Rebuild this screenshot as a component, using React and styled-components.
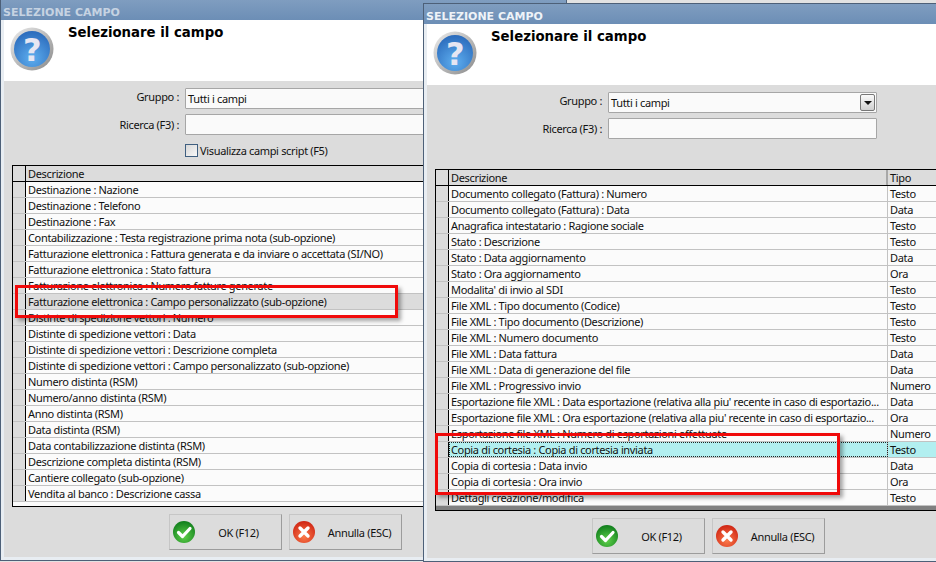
import React from "react";
import styled, { createGlobalStyle } from "styled-components";

const UI_FONT = '"Noto Sans", "Open Sans", sans-serif';

const GlobalStyle = createGlobalStyle`
  html, body {
    margin: 0;
    width: 936px;
    height: 562px;
    overflow: hidden;
    background: #e2e2e2;
    font-family: ${UI_FONT};
    letter-spacing: -0.34px;
  }
`;

const Desktop = styled.div`
  position: relative;
  width: 936px;
  height: 562px;
  overflow: hidden;
`;

const Window = styled.div`
  position: absolute;
  left: ${(p) => p.$left}px;
  top: ${(p) => p.$top}px;
  width: ${(p) => p.$width}px;
  height: ${(p) => p.$height}px;
  box-sizing: border-box;
  display: flex;
  flex-direction: column;
  border: 1px solid #4d6078;
  background: #e8edf2;
`;

const TitleBar = styled.div`
  height: 20px;
  flex: none;
  padding-left: 2px;
  background: linear-gradient(#7f9dc0, #6c8eb6);
  color: ${(p) => (p.$active ? "#eef3f8" : "#c6d3e2")};
  font: bold 11px/25px "DejaVu Sans", sans-serif;
  letter-spacing: 0;
`;

const Header = styled.div`
  height: 61px;
  flex: none;
  margin: 0 3px;
  display: flex;
  background: #fff;
`;

const Heading = styled.div`
  margin: 4px 0 0 14px;
  color: #000;
  font: bold 13.3px/17px "DejaVu Sans", sans-serif;
  letter-spacing: 0;
`;

const IconSlot = styled.div`
  margin: 7px 0 0 6px;
  width: 44px;
  height: 44px;
`;

const Body = styled.div`
  flex: 1;
  min-height: 0;
  margin: 0 3px 3px;
  padding: 7px 8px 0;
  background: #dcdcdc;
  display: flex;
  flex-direction: column;
`;

const FormRow = styled.div`
  display: grid;
  grid-template-columns: 167px 269px;
  column-gap: 6px;
  align-items: center;
  height: 21px;
  margin-bottom: 5px;
`;

const Label = styled.div`
  margin-bottom: ${(p) => p.$lift || 0}px;
  text-align: right;
  font-size: 11px;
  line-height: 18px;
  color: #111;
`;

const Field = styled.div`
  position: relative;
  box-sizing: border-box;
  height: 21px;
  padding-left: 2px;
  border: 1px solid #a6a6a6;
  border-radius: 1px;
  background: #fafafa;
  font-size: 11px;
  line-height: 19px;
  color: #111;
`;

const DropButton = styled.div`
  position: absolute;
  top: 1px;
  right: 1px;
  width: 15px;
  height: 17px;
  box-sizing: border-box;
  display: flex;
  align-items: center;
  justify-content: center;
  border: 1px solid #777;
  border-radius: 2px;
  background: linear-gradient(#fafafa, #cfcfcf);

  &::after {
    content: "";
    border-left: 4px solid transparent;
    border-right: 4px solid transparent;
    border-top: 4px solid #111;
  }
`;

const CheckRow = styled.div`
  height: 16px;
  margin: 2px 0 7px 173px;
  display: flex;
  align-items: center;
  gap: 2px;
  font-size: 11px;
  color: #111;
`;

const CheckBox = styled.div`
  width: 11px;
  height: 11px;
  border: 1px solid #3f5f80;
  background: linear-gradient(135deg, #d8d8d8, #f8f8f8);
`;

const Grid = styled.div`
  flex: none;
  height: 342px;
  box-sizing: border-box;
  overflow: hidden;
  border: 1px solid #000;
  background: #fbfbfb;
`;

const HeadRow = styled.div`
  display: grid;
  grid-template-columns: ${(p) => p.$columns};
  height: 16px;
  box-sizing: border-box;
  border-bottom: 1px solid #000;
  background: #dcdcdc;
`;

const Row = styled.div`
  display: grid;
  grid-template-columns: ${(p) => p.$columns};
  height: 16px;
  box-sizing: border-box;
  border-bottom: 1px solid #c2c2c2;
  background: ${(p) => (p.$selected ? "#dcdcdc" : "#fbfbfb")};
`;

const Indicator = styled.div`
  background: #dcdcdc;
  border-right: 1px solid #000;
`;

const Cell = styled.div`
  box-sizing: border-box;
  padding-left: 2px;
  font-size: 11px;
  line-height: 15px;
  white-space: nowrap;
  overflow: hidden;
  color: #111;
  background: ${(p) => (p.$focus ? "#b2eff0" : "transparent")};
  outline: ${(p) => (p.$dotted ? "1px dotted #222" : "none")};
  outline-offset: -1px;
  border-right: ${(p) => (p.$divider ? "1px solid #c2c2c2" : "none")};
`;

const HeadCell = styled(Cell)`
  border-right: ${(p) => (p.$divider ? "2px solid #a8a8a8" : "none")};
`;

const ScrollEdge = styled.div`
  height: 4px;
  background: #808080;
`;

const ButtonBar = styled.div`
  display: flex;
  gap: 7px;
  margin: 7px 0 0 157px;
`;

const Button = styled.div`
  width: 113px;
  height: 36px;
  box-sizing: border-box;
  display: flex;
  align-items: center;
  border: 1px solid #c6c6c6;
  border-right-color: #9c9c9c;
  border-bottom-color: #9c9c9c;
  background: #dcdcdc;
  font-size: 11px;
  color: #111;
`;

const ButtonIcon = styled.svg`
  flex: none;
  margin-left: 2px;
  width: 24px;
  height: 24px;
`;

const ButtonLabel = styled.span`
  flex: 1;
  text-align: center;
  padding-left: ${(p) => p.$shift}px;
`;

const RedFrame = styled.div`
  position: absolute;
  left: ${(p) => p.$left}px;
  top: ${(p) => p.$top}px;
  width: ${(p) => p.$width}px;
  height: ${(p) => p.$height}px;
  box-sizing: border-box;
  border: 3px solid #f00a0a;
  box-shadow: 3px 3px 4px rgba(0, 0, 0, 0.35);
`;

function QuestionIcon({ id }) {
  return (
    <svg width="44" height="44" viewBox="0 0 44 44">
      <defs>
        <linearGradient id={`${id}-ring`} x1="0" y1="0" x2="1" y2="1">
          <stop offset="0" stopColor="#ececec" />
          <stop offset="1" stopColor="#8a8a8a" />
        </linearGradient>
        <radialGradient id={`${id}-disc`} cx="0.5" cy="0.75" r="0.8">
          <stop offset="0" stopColor="#5eaeef" />
          <stop offset="1" stopColor="#2766b8" />
        </radialGradient>
      </defs>
      <circle cx="22" cy="22" r="21.5" fill={`url(#${id}-ring)`} />
      <circle cx="22" cy="22" r="18" fill={`url(#${id}-disc)`} />
      <text
        x="22"
        y="34"
        textAnchor="middle"
        fontFamily="'DejaVu Sans', sans-serif"
        fontWeight="bold"
        fontSize="32"
        fill="#e6e6f2"
      >
        ?
      </text>
    </svg>
  );
}

function OkIcon({ id }) {
  return (
    <ButtonIcon viewBox="0 0 24 24">
      <defs>
        <radialGradient id={`${id}-ok`} cx="0.5" cy="0.7" r="0.7">
          <stop offset="0" stopColor="#5fd04a" />
          <stop offset="1" stopColor="#0f7d1c" />
        </radialGradient>
      </defs>
      <circle cx="12" cy="12" r="11" fill={`url(#${id}-ok)`} />
      <path d="M6.5 12.5l4 4 7.5-8" fill="none" stroke="#fff" strokeWidth="3.2" strokeLinecap="round" strokeLinejoin="round" />
    </ButtonIcon>
  );
}

function CancelIcon({ id }) {
  return (
    <ButtonIcon viewBox="0 0 24 24">
      <defs>
        <radialGradient id={`${id}-ko`} cx="0.5" cy="0.7" r="0.7">
          <stop offset="0" stopColor="#fb7a4a" />
          <stop offset="1" stopColor="#cf2413" />
        </radialGradient>
      </defs>
      <circle cx="12" cy="12" r="11" fill={`url(#${id}-ko)`} />
      <path d="M8 8l8 8M16 8l-8 8" fill="none" stroke="#fff" strokeWidth="3.4" strokeLinecap="round" />
    </ButtonIcon>
  );
}

const leftRows = [
  "Destinazione : Nazione",
  "Destinazione : Telefono",
  "Destinazione : Fax",
  "Contabilizzazione : Testa registrazione prima nota (sub-opzione)",
  "Fatturazione elettronica : Fattura generata e da inviare o accettata (SI/NO)",
  "Fatturazione elettronica : Stato fattura",
  "Fatturazione elettronica : Numero fatture generate",
  "Fatturazione elettronica : Campo personalizzato (sub-opzione)",
  "Distinte di spedizione vettori : Numero",
  "Distinte di spedizione vettori : Data",
  "Distinte di spedizione vettori : Descrizione completa",
  "Distinte di spedizione vettori : Campo personalizzato (sub-opzione)",
  "Numero distinta (RSM)",
  "Numero/anno distinta (RSM)",
  "Anno distinta (RSM)",
  "Data distinta (RSM)",
  "Data contabilizzazione distinta (RSM)",
  "Descrizione completa distinta (RSM)",
  "Cantiere collegato (sub-opzione)",
  "Vendita al banco : Descrizione cassa",
];

const rightRows = [
  ["Documento collegato (Fattura) : Numero", "Testo"],
  ["Documento collegato (Fattura) : Data", "Data"],
  ["Anagrafica intestatario : Ragione sociale", "Testo"],
  ["Stato : Descrizione", "Testo"],
  ["Stato : Data aggiornamento", "Data"],
  ["Stato : Ora aggiornamento", "Ora"],
  ["Modalita' di invio al SDI", "Testo"],
  ["File XML : Tipo documento (Codice)", "Testo"],
  ["File XML : Tipo documento (Descrizione)", "Testo"],
  ["File XML : Numero documento", "Testo"],
  ["File XML : Data fattura", "Data"],
  ["File XML : Data di generazione del file", "Data"],
  ["File XML : Progressivo invio", "Numero"],
  ["Esportazione file XML : Data esportazione (relativa alla piu' recente in caso di esportazio...", "Data"],
  ["Esportazione file XML : Ora esportazione (relativa alla piu' recente in caso di esportazio...", "Ora"],
  ["Esportazione file XML : Numero di esportazioni effettuate", "Numero"],
  ["Copia di cortesia : Copia di cortesia inviata", "Testo"],
  ["Copia di cortesia : Data invio", "Data"],
  ["Copia di cortesia : Ora invio", "Ora"],
  ["Dettagli creazione/modifica", "Testo"],
];

const LEFT_COLUMNS = "13px 1fr";
const RIGHT_COLUMNS = "13px 439px 1fr";

function FieldPicker({ id, active, left, top, width, height, children, dropdown, showScript }) {
  return (
    <Window $left={left} $top={top} $width={width} $height={height}>
      <TitleBar $active={active}>SELEZIONE CAMPO</TitleBar>
      <Header>
        <IconSlot>
          <QuestionIcon id={id} />
        </IconSlot>
        <Heading>Selezionare il campo</Heading>
      </Header>
      <Body>
        <FormRow>
          <Label $lift={3}>Gruppo :</Label>
          <Field>
            Tutti i campi
            {dropdown && <DropButton />}
          </Field>
        </FormRow>
        <FormRow>
          <Label>Ricerca (F3) :</Label>
          <Field />
        </FormRow>
        <CheckRow>
          {showScript && (
            <>
              <CheckBox />
              Visualizza campi script (F5)
            </>
          )}
        </CheckRow>
        {children}
        <ButtonBar>
          <Button>
            <OkIcon id={id} />
            <ButtonLabel $shift={0}>OK (F12)</ButtonLabel>
          </Button>
          <Button>
            <CancelIcon id={id} />
            <ButtonLabel $shift={2}>Annulla (ESC)</ButtonLabel>
          </Button>
        </ButtonBar>
      </Body>
    </Window>
  );
}

function App() {
  return (
    <Desktop>
      <GlobalStyle />
      <FieldPicker id="back" left={0} top={-1} width={567} height={562} showScript>
        <Grid>
          <HeadRow $columns={LEFT_COLUMNS}>
            <Indicator />
            <HeadCell>Descrizione</HeadCell>
          </HeadRow>
          {leftRows.map((text, i) => (
            <Row key={text} $columns={LEFT_COLUMNS} $selected={i === 7}>
              <Indicator />
              <Cell>{text}</Cell>
            </Row>
          ))}
        </Grid>
      </FieldPicker>
      <FieldPicker id="front" active left={423} top={3} width={620} height={559} dropdown>
        <Grid>
          <HeadRow $columns={RIGHT_COLUMNS}>
            <Indicator />
            <HeadCell $divider>Descrizione</HeadCell>
            <HeadCell>Tipo</HeadCell>
          </HeadRow>
          {rightRows.map(([text, type], i) => (
            <Row key={text} $columns={RIGHT_COLUMNS}>
              <Indicator />
              <Cell $divider $focus={i === 16} $dotted={i === 16}>
                {text}
              </Cell>
              <Cell $focus={i === 16}>{type}</Cell>
            </Row>
          ))}
          <ScrollEdge />
        </Grid>
      </FieldPicker>
      <RedFrame $left={15} $top={285} $width={383} $height={33} />
      <RedFrame $left={435} $top={433} $width={405} $height={62} />
    </Desktop>
  );
}

export default App;
